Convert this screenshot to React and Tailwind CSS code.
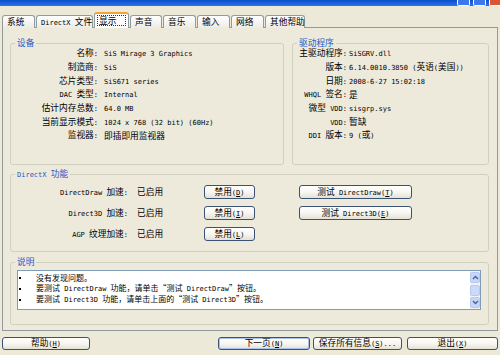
import React from "react";

// CJK runs get the CJK font, everything else the half-width mono font
const SPLIT = /([\u2000-\u206f\u3000-\u303f\u4e00-\u9fff\uff00-\uffef]+)/;

function T({ s, cjk = "text-[8.7px]", lat = "text-[7px]" }) {
  return (
    <span>
      {s.split(SPLIT).map((p, i) =>
        !p ? null : i % 2 ? (
          <span key={i} className={"font-['Noto_Sans_CJK_SC',sans-serif] " + cjk}>{p}</span>
        ) : (
          <span key={i} className={"font-['DejaVu_Sans_Mono',monospace] " + lat}>{p}</span>
        )
      )}
    </span>
  );
}

// "&X" marks the access key
function L({ s }) {
  const [a, b] = s.split("&");
  if (b === undefined) return <T s={s} />;
  return (
    <span>
      <T s={a} />
      <span className="underline font-['DejaVu_Sans_Mono',monospace] text-[7px]">{b[0]}</span>
      <T s={b.slice(1)} />
    </span>
  );
}

function Btn({ className = "", s, def }) {
  return (
    <div
      className={
        "flex items-center justify-center rounded-[3px] border border-[#3A5276] bg-linear-to-b from-white via-[#F7F6F1] to-[#E4E1D4] leading-[12px] whitespace-nowrap " +
        (def ? "shadow-[inset_0_0_0_1px_#A9C3EC] " : "") +
        className
      }
    >
      <L s={s} />
    </div>
  );
}

function Group({ title, className = "", children }) {
  return (
    <fieldset className={"min-w-0 rounded-[3px] border border-[#D0D0BF] " + className}>
      <legend className="ml-[4px] px-[2px] leading-[10px] text-[#1D59C9]">
        <T s={title} />
      </legend>
      {children}
    </fieldset>
  );
}

const tabs = [
  ["系统", 33],
  ["DirectX 文件", 57],
  ["显示", 35, true],
  ["声音", 32],
  ["音乐", 33],
  ["输入", 33],
  ["网络", 33],
  ["其他帮助", 40],
];

const device = [
  ["名称:", "SiS Mirage 3 Graphics"],
  ["制造商:", "SiS"],
  ["芯片类型:", "SiS671 series"],
  ["DAC 类型:", "Internal"],
  ["估计内存总数:", "64.0 MB"],
  ["当前显示模式:", "1024 x 768 (32 bit) (60Hz)"],
  ["监视器:", "即插即用监视器"],
];

const driver = [
  ["主驱动程序:", "SiSGRV.dll"],
  ["版本:", "6.14.0010.3850 (英语(美国))"],
  ["日期:", "2008-6-27 15:02:18"],
  ["WHQL 签名:", "是"],
  ["微型 VDD:", "sisgrp.sys"],
  ["VDD:", "暂缺"],
  ["DDI 版本:", "9 (或)"],
];

const features = [
  ["DirectDraw 加速:", "禁用(&D)", "测试 DirectDraw(&T)"],
  ["Direct3D 加速:", "禁用(&I)", "测试 Direct3D(&E)"],
  ["AGP 纹理加速:", "禁用(&L)", null],
];

const notes = [
  "没有发现问题。",
  "要测试 DirectDraw 功能，请单击“测试 DirectDraw”按钮。",
  "要测试 Direct3D 功能，请单击上面的“测试 Direct3D”按钮。",
];

function Chevron({ up }) {
  return (
    <svg width="7" height="5" viewBox="0 0 7 5">
      <path
        d={up ? "M1 4 L3.5 1.5 L6 4" : "M1 1 L3.5 3.5 L6 1"}
        fill="none"
        stroke="#4D6185"
        strokeWidth="1.4"
      />
    </svg>
  );
}

export default function App() {
  return (
    <div className="flex h-[355px] w-[500px] flex-col overflow-hidden bg-[#ECE9D8] font-['Noto_Sans_CJK_SC',sans-serif] text-[8.7px] text-black">
      {/* title bar, cut off at the top */}
      <div className="flex h-[6px] items-end justify-end gap-[3px] bg-linear-to-b from-[#0A4FCB] to-[#2C74E8]">
        <div className="h-[6px] w-[13px] rounded-b-[2px] border-x border-b border-white bg-[#3A78EC]" />
        <div className="h-[6px] w-[13px] rounded-b-[2px] border-x border-b border-white bg-[#3A78EC]" />
        <div className="h-[6px] w-[11px] rounded-bl-[2px] border-l border-b border-white bg-[#DA5630]" />
      </div>

      {/* tabs */}
      <div className="relative z-10 mt-[6px] flex h-[16px] items-end pl-[2px]">
        {tabs.map(([t, w, sel], i) =>
          sel ? (
            <div
              key={t}
              style={{ width: w }}
              className="ml-[1px] flex h-[16px] flex-col rounded-t-[3px] border-x border-t-[2px] border-x-[#919B9C] border-t-[#F2A33A] bg-[#FCFCFE] px-[2px]"
            >
              <div className="mt-[1px] flex h-[11px] items-center border border-dotted border-[#333] pl-[1px] leading-[10px]">
                <T s={t} />
              </div>
            </div>
          ) : (
            <div
              key={t}
              style={{ width: w }}
              className={
                "flex h-[13px] items-center rounded-t-[3px] border-x border-t border-[#919B9C] bg-linear-to-b from-white to-[#ECEBE5] pl-[4px] leading-[12px] whitespace-nowrap " +
                (i ? "ml-[1px]" : "")
              }
            >
              <T s={t} />
            </div>
          )
        )}
      </div>

      {/* tab page */}
      <div className="-mt-[1px] mx-[2px] flex h-[304px] flex-col border border-[#919B9C] bg-[#EDEADC] pt-[10px] pr-[8px] pl-[7px]">
        <div className="flex h-[127px] gap-[8px]">
          <Group title="设备" className="w-[274px]">
            <div className="-mt-[1px] flex flex-col">
              {device.map(([k, v]) => (
                <div key={k} className="flex h-[13.67px] items-center leading-[12px] whitespace-nowrap">
                  <div className="w-[87px] text-right">
                    <T s={k} />
                  </div>
                  <div className="ml-[6px]">
                    <T s={v} />
                  </div>
                </div>
              ))}
            </div>
          </Group>
          <Group title="驱动程序" className="flex-1">
            <div className="-mt-[1px] flex flex-col">
              {driver.map(([k, v]) => (
                <div key={k} className="flex h-[13.67px] items-center leading-[12px] whitespace-nowrap">
                  <div className="w-[54px] text-right">
                    <T s={k} />
                  </div>
                  <div className="ml-[2px]">
                    <T s={v} />
                  </div>
                </div>
              ))}
            </div>
          </Group>
        </div>

        <Group title="DirectX 功能" className="mt-[4px] h-[83px]">
          <div className="mt-[5px] flex flex-col gap-[7px]">
            {features.map(([k, off, test]) => (
              <div key={k} className="flex h-[14px] items-center leading-[12px] whitespace-nowrap">
                <div className="w-[117px] text-right">
                  <T s={k} />
                </div>
                <div className="ml-[9px] w-[67px]">
                  <T s="已启用" />
                </div>
                <Btn className="h-[14px] w-[51px]" s={off} />
                {test && <Btn className="ml-[44px] h-[14px] w-[113px]" s={test} />}
              </div>
            ))}
          </div>
        </Group>

        <Group title="说明" className="mt-[5px] h-[68px]">
          <div className="mt-[3px] ml-[6px] flex h-[40px] w-[464px] border border-[#7F9DB9] bg-white">
            <div className="flex-1 pt-[1px]">
              {notes.map((n) => (
                <div key={n} className="flex h-[11px] items-center leading-[11px] whitespace-nowrap">
                  <div className="flex w-[18px] pl-[1px]">
                    <div className="h-[2px] w-[2px] bg-black" />
                  </div>
                  <T s={n} cjk="text-[8px]" />
                </div>
              ))}
            </div>
            <div className="flex w-[10px] flex-col gap-[1px] bg-[#F3F3EF] py-[1px]">
              <div className="flex h-[11px] items-center justify-center rounded-[2px] border border-[#B7CAF5] bg-[#C5D6FC]">
                <Chevron up />
              </div>
              <div className="mt-[1px] h-[11px] rounded-[2px] border border-[#B7CAF5] bg-[#CBDAFC]" />
              <div className="mt-auto flex h-[11px] items-center justify-center rounded-[2px] border border-[#B7CAF5] bg-[#C5D6FC]">
                <Chevron />
              </div>
            </div>
          </div>
        </Group>
      </div>

      {/* dialog buttons */}
      <div className="mt-[6px] flex px-[2px]">
        <Btn className="h-[13px] w-[88px]" s="帮助(&H)" />
        <div className="flex-1" />
        <Btn className="h-[13px] w-[92px]" s="下一页(&N)" def />
        <Btn className="ml-[3px] h-[13px] w-[89px]" s="保存所有信息(&S)..." />
        <Btn className="ml-[5px] h-[13px] w-[91px]" s="退出(&X)" />
      </div>
    </div>
  );
}
